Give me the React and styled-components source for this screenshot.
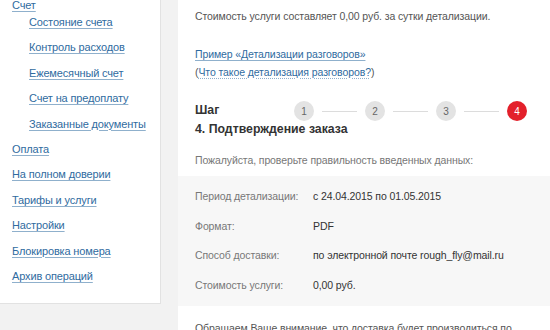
import React from 'react'
import styled, { createGlobalStyle } from 'styled-components'

const GlobalStyle = createGlobalStyle`
  html, body {
    margin: 0;
    padding: 0;
    background: #f2f2f2;
    font-family: "Liberation Sans", Arial, sans-serif;
    overflow: hidden;
  }
`

const menu = [
  { title: 'Счет', sub: ['Состояние счета', 'Контроль расходов', 'Ежемесячный счет', 'Счет на предоплату', 'Заказанные документы'] },
  { title: 'Оплата' },
  { title: 'На полном доверии' },
  { title: 'Тарифы и услуги' },
  { title: 'Настройки' },
  { title: 'Блокировка номера' },
  { title: 'Архив операций' },
]

const summary = [
  ['Период детализации:', 'с 24.04.2015 по 01.05.2015'],
  ['Формат:', 'PDF'],
  ['Способ доставки:', 'по электронной почте rough_fly@mail.ru'],
  ['Стоимость услуги:', '0,00 руб.'],
]

const App = () => {
  return (
    <Page>
      <GlobalStyle />
      <Sidebar>
        <Menu>
          {menu.map((item) => (
            <MenuItem key={item.title}>
              <MenuLink href="#">{item.title}</MenuLink>
              {item.sub && (
                <SubMenu>
                  {item.sub.map((s) => (
                    <MenuItem key={s}>
                      <MenuLink href="#">{s}</MenuLink>
                    </MenuItem>
                  ))}
                </SubMenu>
              )}
            </MenuItem>
          ))}
        </Menu>
      </Sidebar>
      <Content>
        <Note>Стоимость услуги составляет 0,00 руб. за сутки детализации.</Note>
        <Links>
          <div><Link href="#">Пример «Детализации разговоров»</Link></div>
          <div>(<DottedLink href="#">Что такое детализация разговоров?</DottedLink>)</div>
        </Links>
        <StepHeader>
          <StepTitle>
            Шаг
            <Nowrap>4. Подтверждение заказа</Nowrap>
          </StepTitle>
          <Steps>
            {[1, 2, 3, 4].map((n) => (
              <React.Fragment key={n}>
                {n > 1 && <StepLine />}
                <StepDot $active={n === 4}>{n}</StepDot>
              </React.Fragment>
            ))}
          </Steps>
        </StepHeader>
        <Hint>Пожалуйста, проверьте правильность введенных данных:</Hint>
        <Summary>
          {summary.map(([label, value]) => (
            <SummaryRow key={label}>
              <Label>{label}</Label>
              <Value>{value}</Value>
            </SummaryRow>
          ))}
        </Summary>
        <Footnote>Обращаем Ваше внимание, что доставка будет производиться по</Footnote>
      </Content>
    </Page>
  )
}

const Page = styled.div`
  display: flex;
  align-items: flex-start;
  gap: 17px;
  width: 550px;
  height: 330px;
  overflow: hidden;
`

const Sidebar = styled.aside`
  flex: 0 0 161px;
  height: 304px;
  box-sizing: border-box;
  background: #fff;
  border-right: 1px solid #e2e2e2;
  border-bottom: 1px solid #e2e2e2;
  overflow: hidden;
`

const Menu = styled.ul`
  list-style: none;
  margin: -7px 0 0;
  padding: 0 0 0 12px;
`

const MenuItem = styled.li`
  line-height: 25.4px;
  font-size: 11px;
  letter-spacing: -0.15px;
  white-space: nowrap;
`

const SubMenu = styled.ul`
  list-style: none;
  margin: -8.4px 0 0;
  padding: 0 0 0 17px;
`

const MenuLink = styled.a`
  color: #2f6ba0;
  text-decoration: underline;
  text-decoration-color: #8fb0cc;
  text-underline-offset: 2px;
`

const Content = styled.main`
  flex: 1;
  height: 330px;
  background: #fff;
  padding-top: 7px;
  box-sizing: border-box;
  font-size: 10.5px;
  letter-spacing: -0.1px;
  color: #555;
  overflow: hidden;
`

const Block = styled.div`
  padding: 0 17px;
`

const Note = styled(Block)`
  line-height: 18px;
`

const Links = styled(Block)`
  margin-top: 20px;
  line-height: 18px;
`

const Link = styled.a`
  color: #2f6ba0;
  text-decoration: underline;
  text-decoration-color: #8fb0cc;
  text-underline-offset: 2px;
`

const DottedLink = styled(Link)`
  text-decoration-style: dotted;
`

const StepHeader = styled(Block)`
  margin-top: 20px;
  display: flex;
  align-items: flex-start;
`

const StepTitle = styled.div`
  width: 99px;
  font-size: 12.3px;
  letter-spacing: 0;
  font-weight: bold;
  line-height: 19px;
  color: #333;
`

const Nowrap = styled.div`
  white-space: nowrap;
`

const Steps = styled.div`
  display: flex;
  align-items: center;
  gap: 8px;
`

const StepDot = styled.div`
  width: 20px;
  height: 20px;
  border-radius: 50%;
  display: flex;
  align-items: center;
  justify-content: center;
  font-size: 10px;
  background: ${(p) => (p.$active ? '#e3202b' : '#e3e3e3')};
  color: ${(p) => (p.$active ? '#fff' : '#666')};
`

const StepLine = styled.div`
  width: 35px;
  height: 1px;
  background: #dcdcdc;
`

const Hint = styled(Block)`
  margin-top: 12px;
  line-height: 18px;
  color: #777;
`

const Summary = styled.div`
  margin-top: 7px;
  padding: 6px 17px;
  background: #f7f7f7;
`

const SummaryRow = styled.div`
  display: flex;
  line-height: 29.5px;
`

const Label = styled.div`
  width: 118px;
  flex-shrink: 0;
  color: #777;
  white-space: nowrap;
`

const Value = styled.div`
  color: #333;
  white-space: nowrap;
`

const Footnote = styled(Block)`
  margin-top: 13px;
  line-height: 18px;
  white-space: nowrap;
`

export default App
